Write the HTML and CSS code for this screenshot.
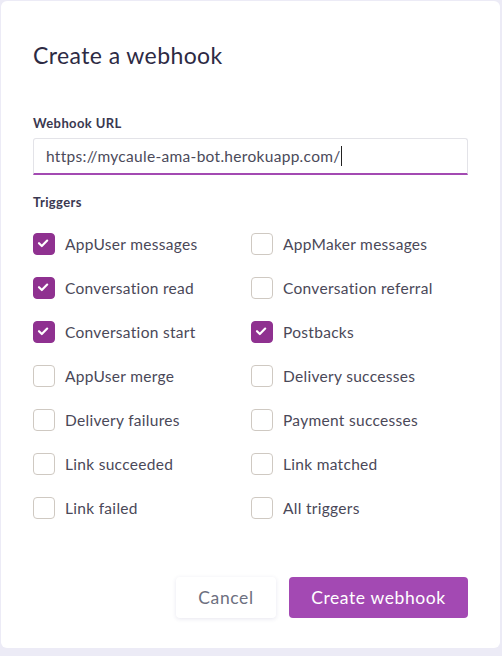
FILE: index.html
```html
<!DOCTYPE html>
<html>
<head>
<meta charset="utf-8">
<link rel="stylesheet" href="styles.css">
</head>
<body>
<div class="modal">
  <h1 class="title">Create a webhook</h1>
  <label class="field-label">Webhook URL</label>
  <div class="input">https://mycaule-ama-bot.herokuapp.com/<span class="caret"></span></div>
  <div class="section-label">Triggers</div>
  <div class="grid">
    <div class="opt"><span class="box on"><svg viewBox="0 0 22 22"><path d="M6.5 11.2 L9.6 14.2 L15.5 8.2" /></svg></span>AppUser messages</div>
    <div class="opt"><span class="box"></span>AppMaker messages</div>
    <div class="opt"><span class="box on"><svg viewBox="0 0 22 22"><path d="M6.5 11.2 L9.6 14.2 L15.5 8.2" /></svg></span>Conversation read</div>
    <div class="opt"><span class="box"></span>Conversation referral</div>
    <div class="opt"><span class="box on"><svg viewBox="0 0 22 22"><path d="M6.5 11.2 L9.6 14.2 L15.5 8.2" /></svg></span>Conversation start</div>
    <div class="opt"><span class="box on"><svg viewBox="0 0 22 22"><path d="M6.5 11.2 L9.6 14.2 L15.5 8.2" /></svg></span>Postbacks</div>
    <div class="opt"><span class="box"></span>AppUser merge</div>
    <div class="opt"><span class="box"></span>Delivery successes</div>
    <div class="opt"><span class="box"></span>Delivery failures</div>
    <div class="opt"><span class="box"></span>Payment successes</div>
    <div class="opt"><span class="box"></span>Link succeeded</div>
    <div class="opt"><span class="box"></span>Link matched</div>
    <div class="opt"><span class="box"></span>Link failed</div>
    <div class="opt"><span class="box"></span>All triggers</div>
  </div>
  <div class="actions">
    <button class="btn cancel">Cancel</button>
    <button class="btn primary">Create webhook</button>
  </div>
</div>
</body>
</html>
```
FILE: styles.css
```css
html, body {
  margin: 0;
  padding: 0;
  background: #ecebf6;
  height: 656px;
  overflow: hidden;
}
body {
  font-family: Lato, "Noto Sans", sans-serif;
  color: #3a3850;
}
.modal {
  box-sizing: border-box;
  margin: 1px 0 0 1px;
  width: 499px;
  height: 647px;
  background: #ffffff;
  border-radius: 6px;
  padding: 39px 32px 0 32px;
  display: flex;
  flex-direction: column;
}
.title {
  margin: 0;
  font-size: 23px;
  font-weight: 400;
  letter-spacing: 0.4px;
  line-height: 30px;
  color: #2d2a44;
}
.field-label {
  margin-top: 44px;
  font-size: 13px;
  font-weight: 700;
  letter-spacing: 0.4px;
  color: #3a3850;
  line-height: 18px;
}
.input {
  margin-top: 6px;
  box-sizing: border-box;
  height: 37px;
  border: 1px solid #e3e3e8;
  border-bottom: 2px solid #a34ab2;
  border-radius: 3px 3px 0 0;
  padding: 0 12px;
  font-size: 15.5px;
  letter-spacing: 0.3px;
  line-height: 33px;
  color: #4b4a5a;
  display: flex;
  align-items: center;
}
.caret {
  display: inline-block;
  width: 1px;
  height: 20px;
  background: #222;
  margin-left: 0;
}
.section-label {
  margin-top: 18px;
  font-size: 13px;
  font-weight: 700;
  letter-spacing: 0.4px;
  line-height: 18px;
  color: #3a3850;
}
.grid {
  margin-top: 22px;
  display: grid;
  grid-template-columns: 218px 1fr;
  row-gap: 22px;
}
.opt {
  display: flex;
  align-items: center;
  height: 22px;
  font-size: 15.5px;
  letter-spacing: 0.3px;
  color: #4a4858;
}
.box {
  box-sizing: border-box;
  width: 22px;
  height: 22px;
  border: 1px solid #cfc9c2;
  border-radius: 4px;
  margin-right: 10px;
  flex: none;
  display: flex;
}
.box.on {
  background: #8f3190;
  border-color: #8f3190;
}
.box svg {
  width: 20px;
  height: 20px;
}
.box path {
  fill: none;
  stroke: #ffffff;
  stroke-width: 2.4;
  stroke-linecap: round;
  stroke-linejoin: round;
  transform: translate(-1px, -1px);
}
.actions {
  margin-top: auto;
  margin-bottom: 30px;
  display: flex;
  justify-content: flex-end;
  gap: 13px;
}
.btn {
  height: 41px;
  border: none;
  border-radius: 4px;
  font-family: Lato, "Noto Sans", sans-serif;
  font-size: 17.5px;
  letter-spacing: 0.6px;
  padding: 0;
  cursor: pointer;
}
.cancel {
  width: 100px;
  background: #fff;
  color: #6d7080;
  box-shadow: 0 1px 4px rgba(60, 50, 120, 0.12);
}
.primary {
  width: 179px;
  background: #a349b3;
  color: #fff;
}
```
